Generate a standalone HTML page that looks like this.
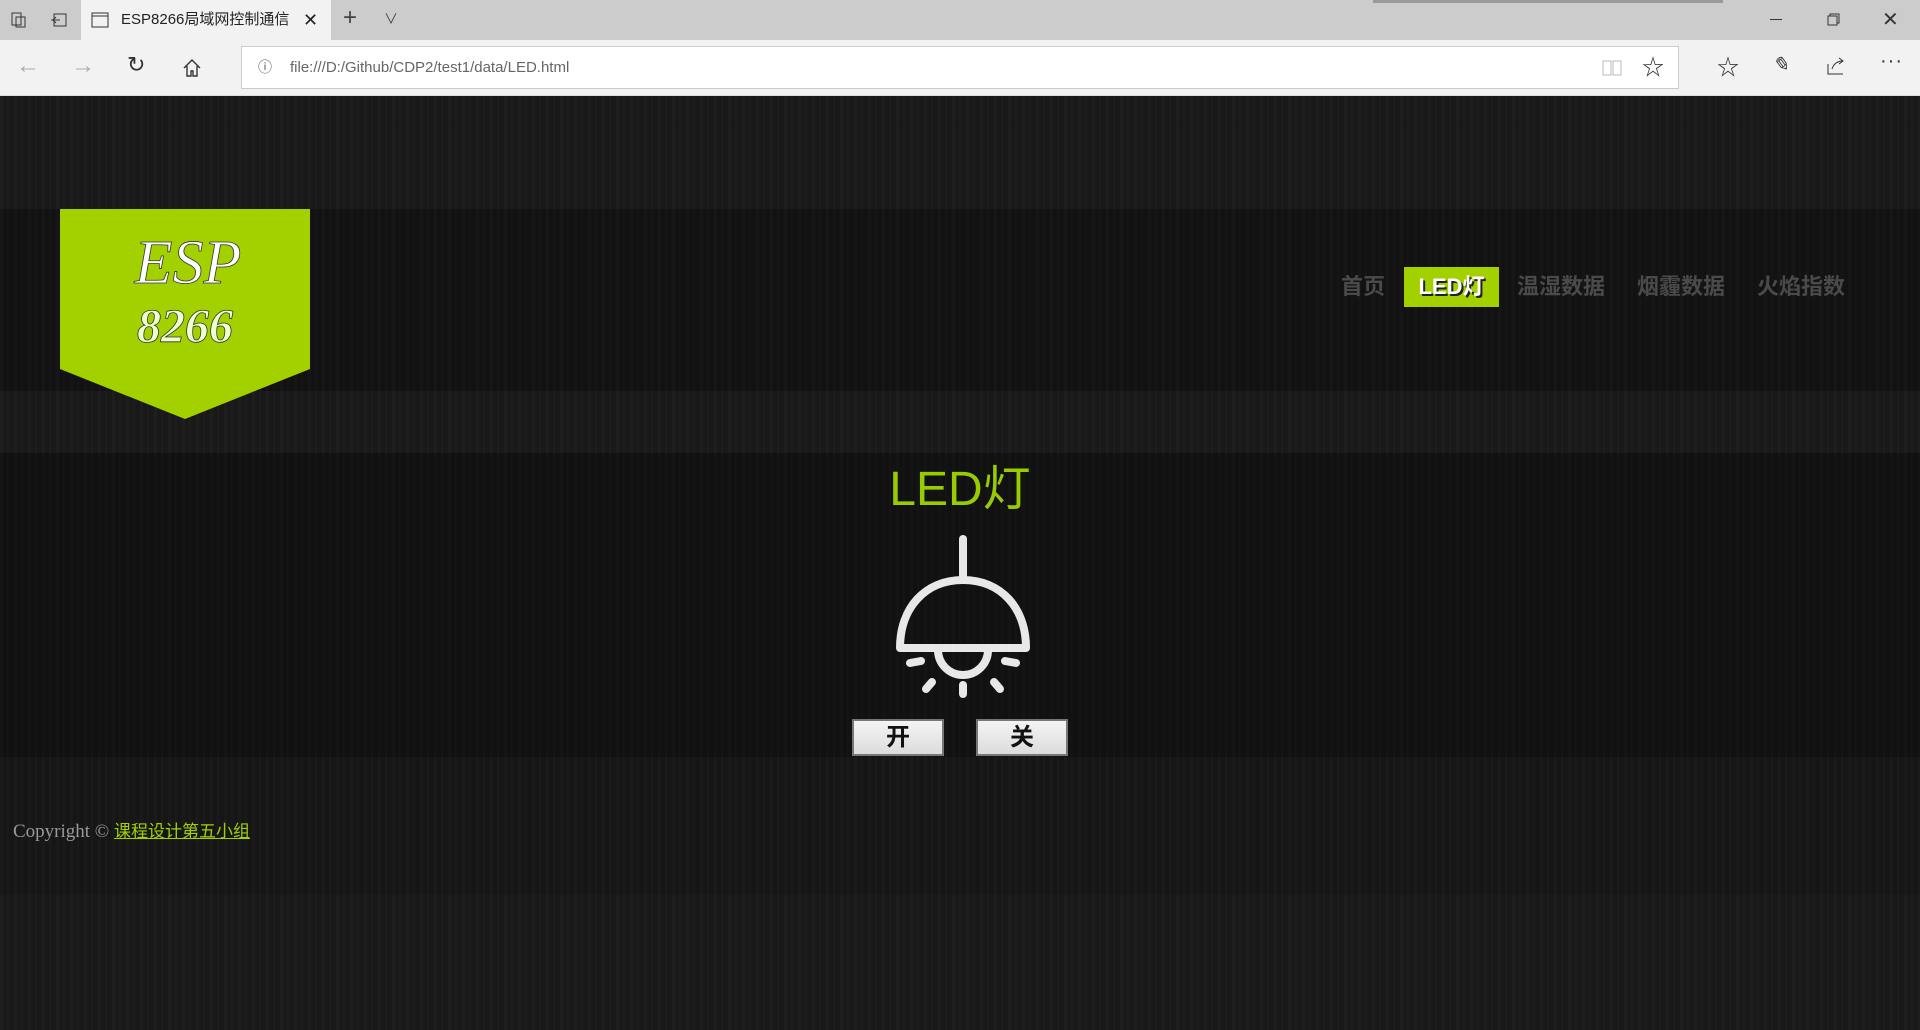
<!DOCTYPE html>
<html><head><meta charset="utf-8"><style>
*{margin:0;padding:0;box-sizing:border-box}
body{width:1920px;height:1030px;overflow:hidden;font-family:"Liberation Sans","Noto Sans CJK SC",sans-serif;background:#1b1b1b;position:relative}
.tabbar{position:absolute;left:0;top:0;width:1920px;height:40px;background:#cccccc}
.tab{position:absolute;left:81px;top:0;width:250px;height:40px;background:#f2f2f2;font-size:15px;color:#222;line-height:40px;padding-left:40px}
.nav2{position:absolute;left:0;top:40px;width:1920px;height:56px;background:#f2f2f2;border-bottom:1px solid #ddd}
.url{position:absolute;left:241px;top:6px;width:1438px;height:43px;background:#fff;border:1px solid #ccc;font-size:15px;color:#666;line-height:41px;padding-left:48px}
.page{position:absolute;left:0;top:96px;width:1920px;height:934px;
background:repeating-linear-gradient(90deg,rgba(255,255,255,0.015) 0 3px,rgba(0,0,0,0.04) 3px 7px,rgba(255,255,255,0.01) 7px 9px,rgba(0,0,0,0.03) 9px 14px),#1a1a1a}
.band{position:absolute;left:0;width:1920px;background:rgba(0,0,0,0.25)}
.logo{position:absolute;left:60px;top:209px;width:250px;height:210px}
.nav{position:absolute;top:267px;height:40px;font-size:22px;font-weight:bold;color:#4a4a4a;line-height:40px}
.btn{position:absolute;top:719px;width:92px;height:37px;background:linear-gradient(#f4f4f4,#dcdcdc);border:2px solid #777;font-size:24px;font-weight:bold;text-align:center;line-height:33px;color:#111}
</style></head><body>
<div class="tabbar">
<svg style="position:absolute;left:10px;top:11px" width="18" height="18" fill="none" stroke="#333"><rect x="2" y="2" width="9" height="12"/><rect x="6" y="6" width="9" height="10"/></svg>
<svg style="position:absolute;left:50px;top:12px" width="18" height="16" fill="none" stroke="#333"><rect x="4" y="2" width="12" height="12"/><path d="M1 8h9M6 5l-3 3 3 3"/></svg>
<div class="tab"><svg style="position:absolute;left:10px;top:12px" width="18" height="16" fill="none" stroke="#333"><rect x="1" y="1" width="16" height="14"/><path d="M1 4h16"/></svg>ESP8266局域网控制通信<span style="position:absolute;left:222px;font-size:18px">✕</span></div>
<div style="position:absolute;left:343px;top:4px;font-size:24px;color:#444">+</div>
<div style="position:absolute;left:384px;top:9px;font-size:14px;color:#444">∨</div>
<div style="position:absolute;left:1373px;top:0;width:350px;height:3px;background:#999"></div>
<div style="position:absolute;left:1770px;top:19px;width:12px;height:1px;background:#333"></div>
<svg style="position:absolute;left:1827px;top:13px" width="14" height="14" fill="none" stroke="#333"><rect x="1" y="3" width="9" height="9"/><path d="M3 3V1h9v9h-2"/></svg>
<div style="position:absolute;left:1882px;top:7px;font-size:20px;color:#333">✕</div>
</div>
<div class="nav2">
<div style="position:absolute;left:16px;top:12px;font-size:24px;color:#aaa">←</div>
<div style="position:absolute;left:71px;top:12px;font-size:24px;color:#aaa">→</div>
<div style="position:absolute;left:127px;top:12px;font-size:22px;color:#333">↻</div>
<svg style="position:absolute;left:182px;top:18px" width="20" height="20" fill="none" stroke="#333" stroke-width="1.4"><path d="M2 10L10 2l8 8M5 8v10h4v-5h2v5h4V8"/></svg>
<div class="url"><span style="position:absolute;left:16px;top:0;font-size:14px;color:#555">ⓘ</span>file:///D:/Github/CDP2/test1/data/LED.html
<svg style="position:absolute;left:1360px;top:12px" width="20" height="18" fill="none" stroke="#bbb"><path d="M1 2h8v14H1zM11 2h8v14h-8z"/></svg>
<div style="position:absolute;left:1400px;top:0;font-size:22px;color:#333">☆</div></div>
<div style="position:absolute;left:1717px;top:10px;font-size:22px;color:#333">☆</div>
<div style="position:absolute;left:1772px;top:12px;font-size:20px;color:#333;font-style:italic">✎</div>
<svg style="position:absolute;left:1826px;top:16px" width="20" height="20" fill="none" stroke="#333"><path d="M2 8v10h15M6 13c2-6 6-8 11-8M13 2l4 3-4 3"/></svg>
<div style="position:absolute;left:1880px;top:10px;font-size:20px;color:#333;letter-spacing:1px">···</div>
</div>
<div class="page">
<div class="band" style="top:113px;height:182px"></div>
<div class="band" style="top:357px;height:304px;background:rgba(0,0,0,0.3)"></div>
<div class="band" style="top:661px;height:137px;background:rgba(0,0,0,0.1)"></div>
</div>
<svg class="logo" viewBox="0 0 250 210"><polygon points="0,0 250,0 250,160 125,210 0,160" fill="#a3d100"/>
<text x="128" y="74" text-anchor="middle" font-family="Liberation Serif,serif" font-style="italic" font-size="62" fill="#fff" stroke="#333" stroke-width="0.8">ESP</text>
<text x="125" y="133" text-anchor="middle" font-family="Liberation Serif,serif" font-style="italic" font-weight="bold" font-size="48" fill="#f0ffd0" stroke="#333" stroke-width="0.8">8266</text></svg>
<div class="nav" style="left:1341px">首页</div>
<div class="nav" style="left:1404px;width:95px;background:#a3d100;color:#fff;text-align:center;text-shadow:2px 2px 0 #222">LED灯</div>
<div class="nav" style="left:1517px">温湿数据</div>
<div class="nav" style="left:1637px">烟霾数据</div>
<div class="nav" style="left:1757px">火焰指数</div>
<div style="position:absolute;left:0;width:1920px;top:462px;text-align:center;font-size:48px;color:#99cc00;line-height:56px">LED灯</div>
<svg style="position:absolute;left:880px;top:530px" width="170" height="180" fill="none" stroke="#e8e8e8" stroke-width="8" stroke-linecap="round">
<path d="M83 9v41"/><path d="M20 118C20 78 45 50 83 50C121 50 146 78 146 118Z" stroke-linejoin="round"/>
<path d="M58 120a25 25 0 0 0 50 0"/>
<path d="M30 133l11-2M136 133l-11-2M46 159l6-7M120 159l-6-7M83 164v-9"/></svg>
<div class="btn" style="left:852px">开</div>
<div class="btn" style="left:976px">关</div>
<div style="position:absolute;left:13px;top:817px;font-family:'Liberation Serif','Noto Sans CJK SC',serif;font-size:19px;color:#999">Copyright © <span style="color:#a3d100;text-decoration:underline;font-family:'Noto Sans CJK SC',sans-serif;font-size:17px">课程设计第五小组</span></div>
</body></html>
